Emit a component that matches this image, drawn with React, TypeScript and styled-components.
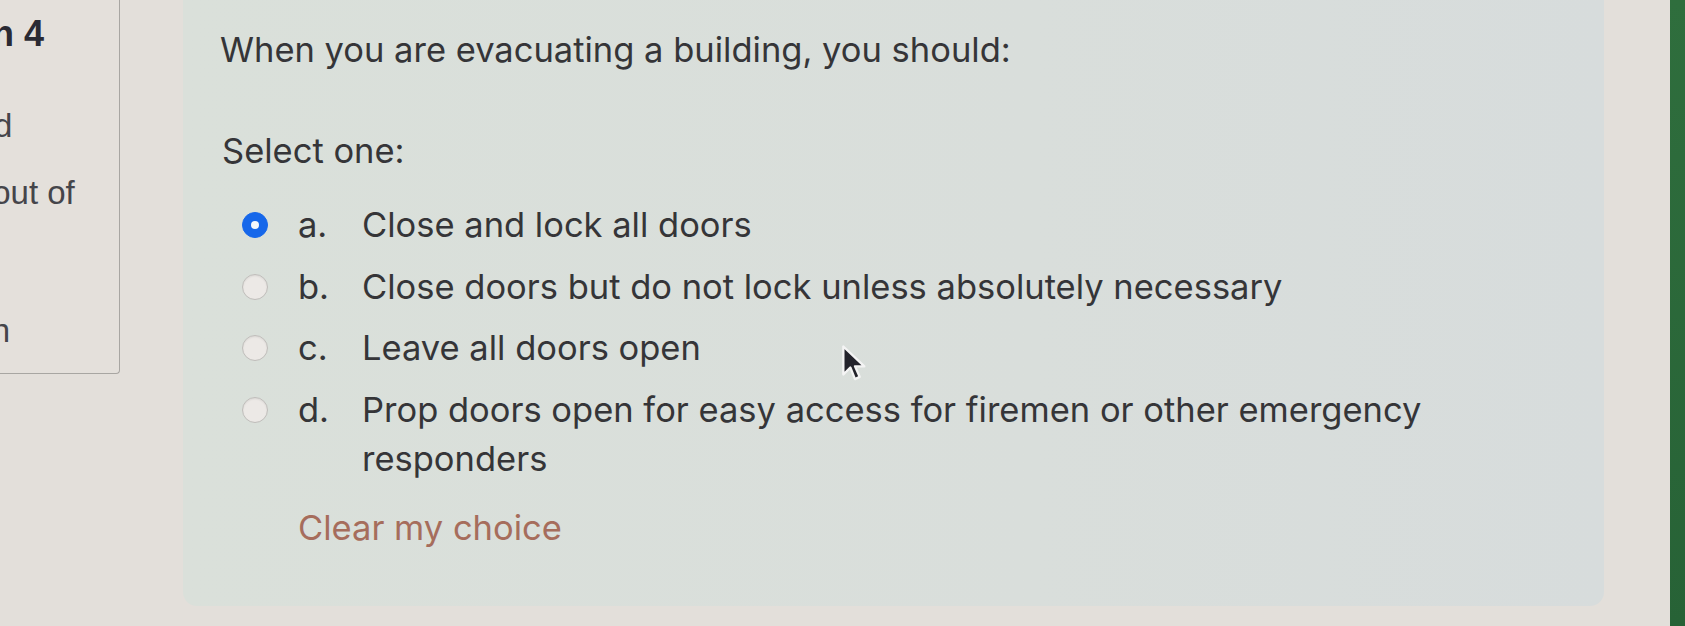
import React from "react"
import styled, {createGlobalStyle} from "styled-components"

const GlobalStyle = createGlobalStyle`
  html, body {
    margin: 0;
    padding: 0;
    overflow: hidden;
    background: #e3dfda;
  }
`

const options = [
  {letter: "a.", text: "Close and lock all doors"},
  {letter: "b.", text: "Close doors but do not lock unless absolutely necessary"},
  {letter: "c.", text: "Leave all doors open"},
  {letter: "d.", text: "Prop doors open for easy access for firemen or other emergency responders"},
]

// left info block, mostly cut off by the photo edge
const infoLines = [
  {text: "Question 4", bold: true, shift: -142, gap: 14},
  {text: "Answer saved", bold: false, shift: -195, gap: 52},
  {text: "Marked out of", bold: false, shift: -127, gap: 27},
  {text: "Flag question", bold: false, shift: -188, gap: 98},
]

const Page = styled.div`
position: relative;
display: flex;
width: 1685px;
height: 626px;
background: #e3dfda;
overflow: hidden;
`

const InfoPanel = styled.div`
flex-shrink: 0;
width: 119px;
height: 373px;
border-right: 1px solid #a8a6a2;
border-bottom: 1px solid #a8a6a2;
border-bottom-right-radius: 4px;
background: #e4e0db;
overflow: hidden;
display: flex;
flex-direction: column;
`

interface InfoLineProps {
  $bold: boolean;
  $shift: number;
  $gap: number;
}

const InfoLine = styled.div<InfoLineProps>`
margin-top: ${props => props.$gap}px;
margin-left: ${props => props.$shift}px;
white-space: nowrap;
font-family: "Liberation Sans", Arial, sans-serif;
font-size: ${props => props.$bold ? 36 : 33}px;
line-height: 40px;
font-weight: ${props => props.$bold ? 700 : 400};
color: ${props => props.$bold ? "#2a2a33" : "#45454a"};
`

const Card = styled.div`
flex-shrink: 0;
box-sizing: border-box;
width: 1421px;
height: 626px;
margin-top: -20px;
margin-left: 63px;
padding: 45px 37px 0 37px;
border-radius: 14px;
background: linear-gradient(90deg, #dae0da 0%, #d9dedb 60%, #d7dcdc 100%);
font-family: Inter, "Liberation Sans", sans-serif;
font-size: 34.5px;
line-height: 49px;
color: #353538;
`

const QuestionText = styled.div`
margin-bottom: 52px;
`

const Prompt = styled.div`
margin-left: 2px;
margin-bottom: 25px;
`

const OptionList = styled.div`
display: flex;
flex-direction: column;
gap: 12.5px;
margin-left: 22px;
width: 1230px;
`

const OptionRow = styled.label`
display: flex;
align-items: flex-start;
`

interface RadioProps {
  $checked: boolean;
}

const Radio = styled.span<RadioProps>`
flex-shrink: 0;
box-sizing: border-box;
width: 26px;
height: 26px;
margin-top: 12px;
border-radius: 50%;
display: flex;
align-items: center;
justify-content: center;
background: ${props => props.$checked ? "#1667ea" : "#ece9e6"};
border: 1px solid ${props => props.$checked ? "#1667ea" : "#bfbdba"};
box-shadow: ${props => props.$checked ? "none" : "inset 0 1px 2px rgba(0,0,0,0.08)"};

&::after {
  content: "";
  display: ${props => props.$checked ? "block" : "none"};
  width: 8px;
  height: 8px;
  border-radius: 50%;
  background: #f4f7fb;
}
`

const Letter = styled.span`
flex-shrink: 0;
width: 64px;
margin-left: 30px;
`

const OptionText = styled.span`
flex: 1;
`

const ClearLink = styled.a`
display: block;
margin-top: 20px;
margin-left: 78px;
color: #a66d5c;
text-decoration: none;
`

const EdgeStrip = styled.div`
flex-shrink: 0;
width: 15px;
margin-left: auto;
background: linear-gradient(180deg, #2f6e3d, #276236);
`

const Cursor = styled.svg`
position: absolute;
left: 841px;
top: 344px;
`

const App = () => {
  return (
    <>
      <GlobalStyle />
      <Page>
        <InfoPanel>
          {infoLines.map(line => (
            <InfoLine key={line.text} $bold={line.bold} $shift={line.shift} $gap={line.gap}>
              {line.text}
            </InfoLine>
          ))}
        </InfoPanel>
        <Card>
          <QuestionText>When you are evacuating a building, you should:</QuestionText>
          <Prompt>Select one:</Prompt>
          <OptionList>
            {options.map((opt, i) => (
              <OptionRow key={opt.letter}>
                <Radio $checked={i === 0} />
                <Letter>{opt.letter}</Letter>
                <OptionText>{opt.text}</OptionText>
              </OptionRow>
            ))}
          </OptionList>
          <ClearLink href="#">Clear my choice</ClearLink>
        </Card>
        <EdgeStrip />
        <Cursor width="28" height="40" viewBox="0 0 24 34">
          <path d="M2 2 L2 26 L8 20 L12 30 L16 28 L12 19 L20 19 Z" fill="#23232b" stroke="#f4f4f4" strokeWidth="2" strokeLinejoin="round" />
        </Cursor>
      </Page>
    </>
  )
}

export default App
